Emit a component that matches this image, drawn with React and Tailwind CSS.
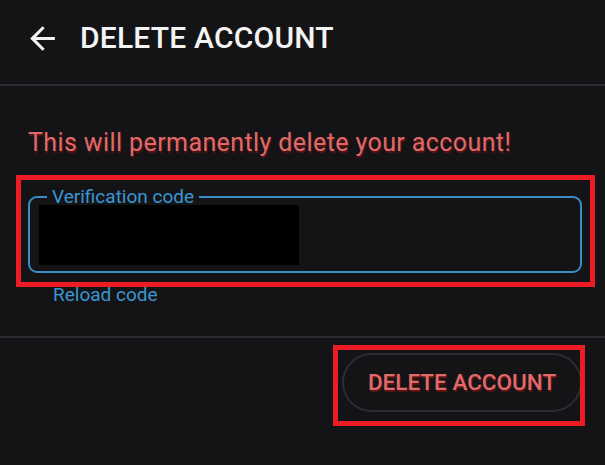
import React from "react";

export default function App() {
  return (
    <div
      className="relative w-[605px] h-[465px] overflow-hidden bg-[#141416] text-white"
      style={{ fontFamily: "Roboto, 'Liberation Sans', sans-serif" }}
    >
      {/* Header */}
      <div className="flex items-center h-[84px] pb-[8px] pl-[24px]">
        <svg width="37" height="37" viewBox="0 0 24 24" fill="#f2f2f2">
          <path d="M20 11H7.83l5.59-5.59L12 4l-8 8 8 8 1.41-1.41L7.83 13H20v-2z" />
        </svg>
        <h1 className="ml-[19px] text-[30px] leading-[36px] font-medium tracking-[0.2px] text-[#f4f4f4]">
          DELETE ACCOUNT
        </h1>
      </div>
      <div className="h-[2px] bg-[#2c2c31]" />

      {/* Body */}
      <div className="flex flex-col px-[28px]">
        <p className="mt-[42px] text-[25px] leading-[29px] tracking-[0.4px] text-[#e06a6a] [text-shadow:1px_2px_1px_#5a1515]">
          This will permanently delete your account!
        </p>
        <fieldset className="mt-[29px] w-[554px] border-2 border-[#3a8cc4] rounded-[9px] pb-[6px] px-0 m-0">
          <legend className="ml-[17px] px-[5px] text-[19px] leading-[22px] text-[#3a96d2]">
            Verification code
          </legend>
          <div className="-mt-[3px] ml-[9px] w-[260px] h-[60px] bg-black" />
        </fieldset>
        <button className="self-start ml-[25px] mt-[11px] text-[19px] leading-[22px] text-[#3a96d2]">
          Reload code
        </button>
      </div>
      <div className="mt-[30px] h-[2px] bg-[#2c2c31]" />
      <div className="flex justify-end pr-[23px] pt-[15px]">
        <button className="w-[240px] h-[59px] rounded-full border-2 border-[#2c2c33] text-[22.5px] font-medium text-[#e06a6a] [text-shadow:1px_2px_1px_#5a1515]">
          DELETE ACCOUNT
        </button>
      </div>

      {/* Annotation overlays */}
      <div className="absolute left-[16px] top-[175px] w-[579px] h-[112px] border-[5px] border-[#ed1c24] pointer-events-none" />
      <div className="absolute left-[333px] top-[345px] w-[252px] h-[81px] border-[5px] border-[#ed1c24] pointer-events-none" />
    </div>
  );
}
